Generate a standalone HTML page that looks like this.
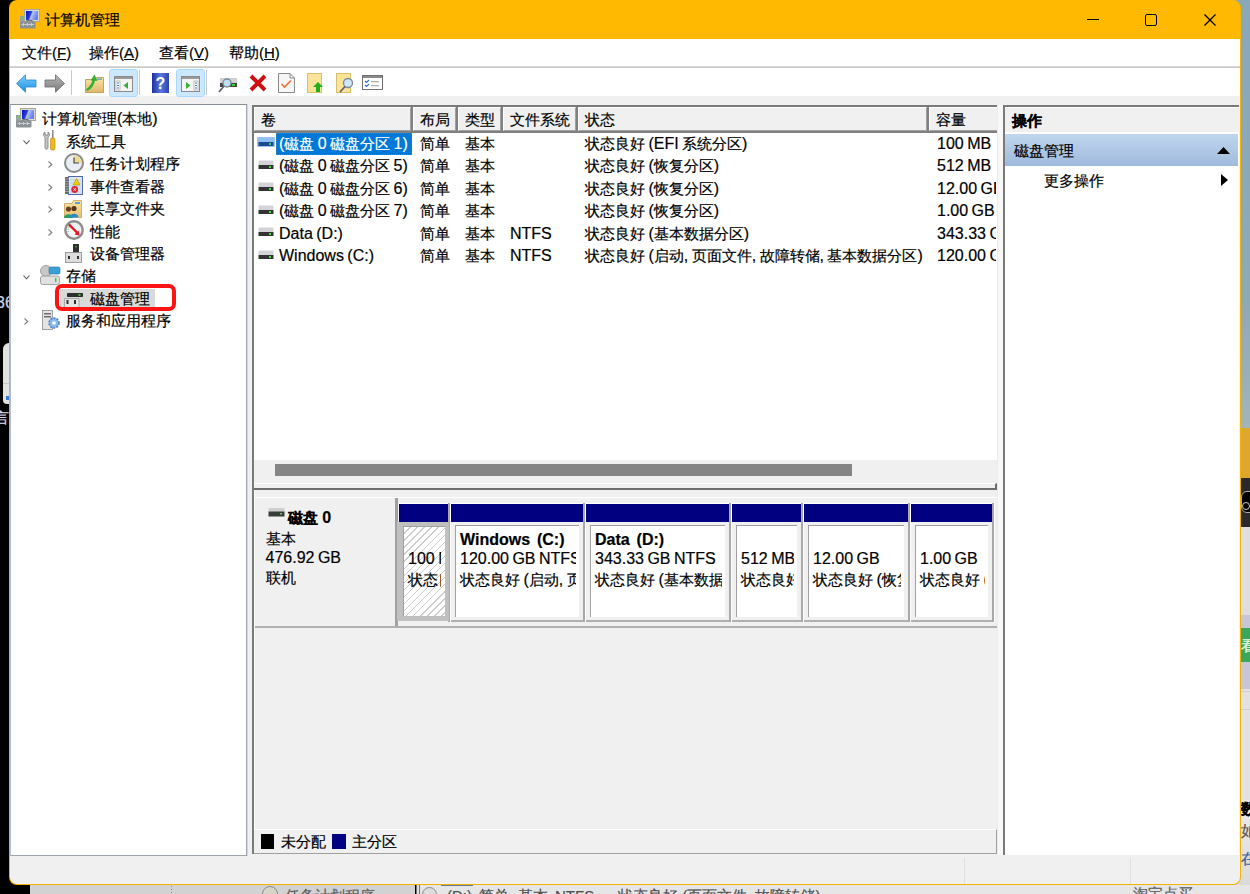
<!DOCTYPE html>
<html><head><meta charset="utf-8"><style>
*{margin:0;padding:0;box-sizing:border-box}
html,body{width:1250px;height:894px;overflow:hidden;background:#000}
body{position:relative;font-family:"Liberation Sans",sans-serif;font-size:15px;color:#000}
.t{position:absolute;white-space:nowrap;line-height:20px;font-size:15px;-webkit-text-stroke-width:0.2px}
.L{font-size:16px;word-spacing:-1px}
.b{font-weight:bold}
svg{overflow:visible}
</style></head><body>
<div style="position:absolute;left:1241px;top:0px;width:9px;height:428px;background:linear-gradient(#88a8ba,#8ea9b6 70%,#a0b4ba)"></div>
<div style="position:absolute;left:1225px;top:0px;width:25px;height:21px;background:#8aa8b8"></div>
<div style="position:absolute;left:1220px;top:870px;width:30px;height:24px;background:#d8d8d8"></div>
<div style="position:absolute;left:1241px;top:428px;width:9px;height:50px;background:#dfa72c"></div>
<div style="position:absolute;left:1241px;top:478px;width:9px;height:49px;background:#2a2a2a"></div>
<div style="position:absolute;left:1241px;top:491px;width:20px;height:22px;background:#000;border:1.2px solid #aaa;border-radius:6px"></div>
<div style="position:absolute;left:1242px;top:502px;width:8px;height:8px;border:1.3px solid #ccc;border-radius:50%"></div>
<div style="position:absolute;left:1241px;top:527px;width:9px;height:88px;background:#dedede"></div>
<div style="position:absolute;left:1241px;top:615px;width:9px;height:13px;background:#c6c6d8"></div>
<div style="position:absolute;left:1241px;top:628px;width:9px;height:34px;background:#3aa85a"></div>
<div class="t" style="left:1241px;top:636px;color:#e8f8e8">看</div>
<div style="position:absolute;left:1241px;top:662px;width:9px;height:27px;background:#c6c6d8"></div>
<div style="position:absolute;left:1241px;top:689px;width:9px;height:111px;background:#e2e2e2"></div>
<div style="position:absolute;left:1241px;top:691px;width:9px;height:1px;background:#d0d0d0"></div>
<div style="position:absolute;left:1241px;top:709px;width:9px;height:1px;background:#d0d0d0"></div>
<div style="position:absolute;left:1241px;top:800px;width:9px;height:94px;background:linear-gradient(#ececec,#d8d8d8)"></div>
<div style="position:absolute;left:1241px;top:800px;width:9px;height:90px;overflow:hidden"><div class="t" style="left:0;top:-1px;font-weight:bold">数</div><div class="t" style="left:0;top:21px;color:#555">如</div><div class="t" style="left:0;top:49px;color:#3a5a9a">在</div></div>
<div class="t" style="left:-4px;top:293px;color:#c8d8f0;font-size:16px">36</div>
<div style="position:absolute;left:3px;top:343px;width:12px;height:61px;background:#e2e2e2;border-radius:6px 0 0 4px"></div>
<div style="position:absolute;left:3px;top:383px;width:6px;height:1px;background:#c8c8c8"></div>
<div style="position:absolute;left:6px;top:396px;width:3px;height:4px;background:#3a7ad0"></div>
<div class="t" style="left:-6px;top:408px;color:#dde;font-size:15px">言</div>
<div style="position:absolute;left:30px;top:885px;width:385px;height:9px;background:#d2d2d2"></div>
<div style="position:absolute;left:420px;top:885px;width:830px;height:9px;background:#e6e6e6"></div>
<div style="position:absolute;left:416px;top:885px;width:1px;height:9px;background:#707070"></div>
<div style="position:absolute;left:419px;top:885px;width:1px;height:9px;background:#707070"></div>
<div style="position:absolute;left:417px;top:885px;width:2px;height:9px;background:#e0e0e0"></div>
<div style="position:absolute;left:171px;top:886px;width:1px;height:8px;background:repeating-linear-gradient(#888 0 1px,transparent 1px 3px)"></div>
<div style="position:absolute;left:262px;top:886px;width:16px;height:16px;border:1.5px solid #8a8a8a;border-radius:50%;background:#d8d4c8"></div>
<div class="t" style="left:285px;top:886px;color:#606060">任务计划程序</div>
<div style="position:absolute;left:422px;top:887px;width:15px;height:15px;border:1.5px solid #8a8a8a;border-radius:50%;background:#ddd"></div>
<div style="position:absolute;left:441px;top:885px;width:32px;height:1px;background:#5a7aa0"></div>
<div class="t" style="left:447px;top:886px;color:#505050">(D:)</div>
<div class="t" style="left:479px;top:886px;color:#505050">简单</div>
<div class="t" style="left:518px;top:886px;color:#505050">基本</div>
<div class="t" style="left:555px;top:886px;color:#505050">NTFS</div>
<div class="t" style="left:618px;top:886px;color:#505050">状态良好 (页面文件, 故障转储)</div>
<div class="t" style="left:1133px;top:884px;color:#606060">淘宝点买</div>
<div style="position:absolute;left:9px;top:0px;width:1232px;height:885px;border:1px solid #f6b200;border-top-color:#ffb900;border-radius:8px;background:linear-gradient(#ffb900 0 38px,#f0f0f0 38px);overflow:hidden"><div style="position:absolute;left:0;top:-1px;width:1230px;height:40px;background:#ffb900"></div><div style="position:absolute;left:0;top:38px;width:1230px;height:28px;background:#fff"></div><div style="position:absolute;left:0;top:65px;width:1230px;height:1px;background:#d8d8d8"></div><div style="position:absolute;left:0;top:66px;width:1230px;height:1px;background:#cacaca"></div><div style="position:absolute;left:0;top:67px;width:1230px;height:28px;background:#fff"></div></div>
<div class="t " style="left:45px;top:9.5px;">计算机管理</div>
<svg style="position:absolute;left:20px;top:9px" width="21" height="20" viewBox="0 0 21 20"><defs><linearGradient id="gsc" x1="0" y1="0" x2="1" y2="0.3"><stop offset="0" stop-color="#0010b8"/><stop offset="0.45" stop-color="#2a40e0"/><stop offset="0.55" stop-color="#b8c4f8"/><stop offset="1" stop-color="#6a80e8"/></linearGradient></defs><rect x="4.5" y="0.5" width="15" height="12" fill="#dcdcd0" stroke="#a8a898" stroke-width="1"/><rect x="6" y="2" width="12" height="9" fill="url(#gsc)"/><rect x="0" y="7" width="4" height="8" fill="#9aa0a4"/><rect x="1" y="8" width="2.5" height="2.5" fill="#5fd05f"/><path d="M6 12.5Q9.5 10 13 12.5" stroke="#606870" stroke-width="1.2" fill="none"/><rect x="0" y="12.5" width="15.5" height="7" rx="1" fill="#8a9298"/><rect x="1.5" y="15" width="12.5" height="1" fill="#c8ccd0"/><rect x="3" y="14" width="1" height="3" fill="#c8ccd0"/><rect x="7" y="14" width="1" height="3" fill="#c8ccd0"/><rect x="11" y="14" width="1" height="3" fill="#c8ccd0"/></svg>
<div style="position:absolute;left:1087px;top:19px;width:12px;height:1px;background:#000"></div>
<div style="position:absolute;left:1145px;top:14px;width:12px;height:12px;border:1.5px solid #000;border-radius:2px"></div>
<svg style="position:absolute;left:1204px;top:14px" width="12" height="12" viewBox="0 0 12 12"><path d="M0.5 0.5L11.5 11.5M11.5 0.5L0.5 11.5" stroke="#000" stroke-width="1.3"/></svg>
<div class="t" style="left:22px;top:43px">文件(<u>F</u>)</div>
<div class="t" style="left:89px;top:43px">操作(<u>A</u>)</div>
<div class="t" style="left:159px;top:43px">查看(<u>V</u>)</div>
<div class="t" style="left:229px;top:43px">帮助(<u>H</u>)</div>
<svg style="position:absolute;left:16px;top:74px" width="21" height="19" viewBox="0 0 21 19"><defs><linearGradient id="ga" x1="0" y1="0" x2="0" y2="1"><stop offset="0" stop-color="#7fd0ff"/><stop offset="1" stop-color="#1a8ee0"/></linearGradient></defs><path d="M0.5 9.5L9.5 0.8V6H20V13H9.5V18.2Z" fill="url(#ga)" stroke="#2a88d0" stroke-width="0.8"/></svg>
<svg style="position:absolute;left:44px;top:74px" width="21" height="19" viewBox="0 0 21 19"><defs><linearGradient id="gb" x1="0" y1="0" x2="0" y2="1"><stop offset="0" stop-color="#b8b8b8"/><stop offset="1" stop-color="#7a7a7a"/></linearGradient></defs><path d="M20.5 9.5L11.5 0.8V6H1V13H11.5V18.2Z" fill="url(#gb)" stroke="#6a6a6a" stroke-width="0.8"/></svg>
<div style="position:absolute;left:71px;top:70px;width:1px;height:25px;background:#c8c8c8"></div>
<svg style="position:absolute;left:85px;top:74px" width="19" height="19" viewBox="0 0 19 19"><defs><linearGradient id="gf1" x1="0" y1="0" x2="0" y2="1"><stop offset="0" stop-color="#fbe6a8"/><stop offset="1" stop-color="#e0b868"/></linearGradient></defs><path d="M0.5 5.5H10L11.5 3.5H18.5V18.5H0.5Z" fill="url(#gf1)" stroke="#c09a50" stroke-width="0.9"/><rect x="12" y="4.5" width="5" height="1.3" fill="#5aa0e0"/><path d="M2.5 15.5C5 14 8 12 9 5" stroke="#34b034" stroke-width="2.6" fill="none" stroke-linecap="round"/><path d="M5.5 6.5L9.5 0.5L12.5 7Z" fill="#34b034"/></svg>
<div style="position:absolute;left:109px;top:69px;width:29px;height:28px;background:#cce8ff;border:1px solid #a8d8ff;border-radius:3px"></div>
<svg style="position:absolute;left:114px;top:76px" width="19" height="16" viewBox="0 0 19 16"><rect x="0.5" y="0.5" width="18" height="15" fill="#f4f4f4" stroke="#8a8a8a"/><rect x="1" y="1" width="17" height="2" fill="#9a9a9a"/><rect x="2" y="5" width="4" height="9" fill="#fff" stroke="#9a9a9a" stroke-width="0.6"/><rect x="3" y="6.5" width="2" height="1" fill="#3a7ac8"/><rect x="3" y="9" width="2" height="1" fill="#3a7ac8"/><rect x="3" y="11.5" width="2" height="1" fill="#3a7ac8"/><path d="M14 6V13L9.5 9.5Z" fill="#38b038"/></svg>
<div style="position:absolute;left:139px;top:70px;width:1px;height:25px;background:#c8c8c8"></div>
<svg style="position:absolute;left:152px;top:73px" width="17" height="20" viewBox="0 0 17 20"><defs><linearGradient id="gh" x1="0" y1="0" x2="1" y2="0"><stop offset="0" stop-color="#1c2f9a"/><stop offset="0.5" stop-color="#5a78e0"/><stop offset="1" stop-color="#2a44b0"/></linearGradient></defs><rect x="0" y="0" width="17" height="20" fill="url(#gh)"/><text x="8.5" y="16" font-size="16" font-weight="bold" fill="#fff" text-anchor="middle" font-family="Liberation Sans">?</text></svg>
<div style="position:absolute;left:176px;top:69px;width:29px;height:28px;background:#cce8ff;border:1px solid #a8d8ff;border-radius:3px"></div>
<svg style="position:absolute;left:181px;top:76px" width="19" height="16" viewBox="0 0 19 16"><rect x="0.5" y="0.5" width="18" height="15" fill="#f4f4f4" stroke="#8a8a8a"/><rect x="1" y="1" width="17" height="2" fill="#9a9a9a"/><rect x="13" y="5" width="4" height="9" fill="#fff" stroke="#9a9a9a" stroke-width="0.6"/><rect x="14" y="6.5" width="2" height="1" fill="#3a7ac8"/><rect x="14" y="9" width="2" height="1" fill="#3a7ac8"/><rect x="14" y="11.5" width="2" height="1" fill="#3a7ac8"/><path d="M5 6V13L9.5 9.5Z" fill="#38b038"/></svg>
<div style="position:absolute;left:206px;top:70px;width:1px;height:25px;background:#c8c8c8"></div>
<svg style="position:absolute;left:218px;top:75px" width="20" height="18" viewBox="0 0 20 18"><rect x="2" y="3" width="17" height="5" fill="#d0d0d0"/><rect x="2" y="8" width="17" height="4" fill="#444"/><rect x="14" y="9" width="3" height="2" fill="#3ad03a"/><circle cx="9" cy="8" r="4" fill="#bfe0f0" stroke="#7a8a98" stroke-width="1.3"/><path d="M6 11L1 17" stroke="#5a6470" stroke-width="1.8"/></svg>
<svg style="position:absolute;left:249px;top:74px" width="18" height="18" viewBox="0 0 18 18"><path d="M2 2L16 16M16 2L2 16" stroke="#d01010" stroke-width="4"/></svg>
<svg style="position:absolute;left:278px;top:73px" width="17" height="20" viewBox="0 0 17 20"><path d="M0.5 0.5H12L16.5 5V19.5H0.5Z" fill="#f6f6f6" stroke="#8a8a8a"/><path d="M12 0.5V5H16.5" fill="none" stroke="#8a8a8a"/><path d="M3.5 11L6.5 14L13 7.5" fill="none" stroke="#f07030" stroke-width="1.6"/></svg>
<svg style="position:absolute;left:307px;top:73px" width="18" height="20" viewBox="0 0 18 20"><rect x="0.5" y="0.5" width="14" height="19" fill="#fbe49a" stroke="#d8c06a"/><path d="M11 9L16 14H13V19H9V14H6Z" fill="#20b020"/></svg>
<svg style="position:absolute;left:336px;top:73px" width="19" height="20" viewBox="0 0 19 20"><rect x="0.5" y="0.5" width="14" height="19" fill="#fbe49a" stroke="#d8c06a"/><circle cx="12" cy="10" r="4.5" fill="#cfe6f4" stroke="#7a8a98" stroke-width="1.3"/><path d="M9 13.5L4 19" stroke="#5a6470" stroke-width="1.8"/></svg>
<svg style="position:absolute;left:362px;top:75px" width="21" height="15" viewBox="0 0 21 15"><rect x="0.5" y="0.5" width="20" height="14" fill="#fff" stroke="#707070"/><rect x="1" y="1" width="19" height="2" fill="#8a8a8a"/><path d="M3 6L4.5 7.5L7 5M3 10L4.5 11.5L7 9" fill="none" stroke="#3070d0" stroke-width="1.2"/><rect x="9" y="6" width="8" height="1.3" fill="#b0b0b0"/><rect x="9" y="10" width="8" height="1.3" fill="#b0b0b0"/></svg>
<div style="position:absolute;left:10px;top:104px;width:237px;height:752px;background:#fff;border:1px solid #a0a6ae;border-top-color:#8a9098;border-left-color:#b4bccc"></div>
<div style="position:absolute;left:247px;top:104px;width:1px;height:752px;background:#d4d8dc"></div>
<svg style="position:absolute;left:16px;top:108px" width="21" height="20" viewBox="0 0 21 20"><defs><linearGradient id="gsc2" x1="0" y1="0" x2="1" y2="0.3"><stop offset="0" stop-color="#0010b8"/><stop offset="0.45" stop-color="#2a40e0"/><stop offset="0.55" stop-color="#b8c4f8"/><stop offset="1" stop-color="#6a80e8"/></linearGradient></defs><rect x="4.5" y="0.5" width="15" height="12" fill="#dcdcd0" stroke="#a8a898" stroke-width="1"/><rect x="6" y="2" width="12" height="9" fill="url(#gsc2)"/><rect x="0" y="7" width="4" height="8" fill="#9aa0a4"/><rect x="1" y="8" width="2.5" height="2.5" fill="#5fd05f"/><path d="M6 12.5Q9.5 10 13 12.5" stroke="#606870" stroke-width="1.2" fill="none"/><rect x="0" y="12.5" width="15.5" height="7" rx="1" fill="#8a9298"/><rect x="1.5" y="15" width="12.5" height="1" fill="#c8ccd0"/><rect x="3" y="14" width="1" height="3" fill="#c8ccd0"/><rect x="7" y="14" width="1" height="3" fill="#c8ccd0"/><rect x="11" y="14" width="1" height="3" fill="#c8ccd0"/></svg>
<div class="t " style="left:42px;top:109px;">计算机管理<span class="L">(</span>本地<span class="L">)</span></div>
<svg style="position:absolute;left:23px;top:139.5px" width="7" height="5" viewBox="0 0 7 5"><path d="M0.5 0.5L3.5 3.8L6.5 0.5" fill="none" stroke="#505050" stroke-width="1.1"/></svg>
<svg style="position:absolute;left:42px;top:130px" width="15" height="20" viewBox="0 0 15 20"><path d="M3 2C1 3 1 6 3 7V18C3 19.5 6 19.5 6 18V7C8 6 8 3 6 2V5H3Z" fill="#c8c8c8" stroke="#7a7a7a" stroke-width="0.8"/><rect x="10" y="0" width="1.5" height="9" fill="#8a8a8a"/><rect x="8.5" y="8" width="4.5" height="12" rx="1.5" fill="#f0b818" stroke="#b08010" stroke-width="0.6"/></svg>
<div class="t " style="left:66px;top:131.5px;">系统工具</div>
<svg style="position:absolute;left:48px;top:161px" width="5" height="7" viewBox="0 0 5 7"><path d="M0.5 0.5L3.8 3.5L0.5 6.5" fill="none" stroke="#808080" stroke-width="1.1"/></svg>
<svg style="position:absolute;left:64px;top:153px" width="20" height="20" viewBox="0 0 20 20"><circle cx="10" cy="10" r="9" fill="#e8eef4" stroke="#8a8a8a" stroke-width="2"/><path d="M10 10V2.5A7.5 7.5 0 0 1 17.5 10Z" fill="#f0d890"/><path d="M10 4.5V10H15" fill="none" stroke="#404850" stroke-width="1.2"/></svg>
<div class="t " style="left:90px;top:154px;">任务计划程序</div>
<svg style="position:absolute;left:48px;top:183.5px" width="5" height="7" viewBox="0 0 5 7"><path d="M0.5 0.5L3.8 3.5L0.5 6.5" fill="none" stroke="#808080" stroke-width="1.1"/></svg>
<svg style="position:absolute;left:65px;top:176px" width="18" height="19" viewBox="0 0 18 19"><rect x="3.5" y="0.5" width="14" height="18" fill="#dbe6f6" stroke="#5068a8" stroke-width="1"/><path d="M5 4H16M5 7H16M5 10H16M5 13H16M5 16H16" stroke="#b8c8e0" stroke-width="0.8"/><rect x="0" y="1" width="3.5" height="17" fill="#6a6a6a"/><path d="M0 3H4M0 5.5H4M0 8H4M0 10.5H4M0 13H4M0 15.5H4" stroke="#b0b0b0" stroke-width="0.8"/><path d="M11.5 2.5L15 9H8Z" fill="#f0d000" stroke="#b09000" stroke-width="0.6"/><circle cx="9.7" cy="13.5" r="3.4" fill="#d82838"/><path d="M8.5 12.3L11 14.7M11 12.3L8.5 14.7" stroke="#fff" stroke-width="0.8"/></svg>
<div class="t " style="left:90px;top:176.5px;">事件查看器</div>
<svg style="position:absolute;left:48px;top:206px" width="5" height="7" viewBox="0 0 5 7"><path d="M0.5 0.5L3.8 3.5L0.5 6.5" fill="none" stroke="#808080" stroke-width="1.1"/></svg>
<svg style="position:absolute;left:64px;top:200px" width="18" height="18" viewBox="0 0 18 18"><defs><linearGradient id="gsf" x1="0" y1="0" x2="0" y2="1"><stop offset="0" stop-color="#fbe4a0"/><stop offset="1" stop-color="#e6c070"/></linearGradient></defs><path d="M0.5 3.5H8L9.5 0.5H17.5V17.5H0.5Z" fill="url(#gsf)" stroke="#c8a058" stroke-width="0.8"/><rect x="11" y="2" width="5" height="2" fill="#58a0e0"/><circle cx="4.5" cy="9" r="2.6" fill="#6a4020"/><path d="M0 18C0 13 9 13 9 18Z" fill="#2aa060"/><circle cx="10" cy="8.5" r="2.6" fill="#5a3418"/><path d="M5.5 17.5C5.5 12.5 14.5 12.5 14.5 17.5Z" fill="#2a8ac8"/></svg>
<div class="t " style="left:90px;top:199px;">共享文件夹</div>
<svg style="position:absolute;left:48px;top:228.5px" width="5" height="7" viewBox="0 0 5 7"><path d="M0.5 0.5L3.8 3.5L0.5 6.5" fill="none" stroke="#808080" stroke-width="1.1"/></svg>
<svg style="position:absolute;left:64px;top:220px" width="20" height="20" viewBox="0 0 20 20"><defs><radialGradient id="gpf" cx="0.5" cy="0.6" r="0.6"><stop offset="0" stop-color="#ffffff"/><stop offset="1" stop-color="#e8ece8"/></radialGradient></defs><circle cx="10" cy="10" r="8.7" fill="url(#gpf)" stroke="#8c8c8c" stroke-width="2.4"/><path d="M4.5 12A6 6 0 0 1 7 5" stroke="#70a880" stroke-width="1.2" fill="none" stroke-dasharray="1 1.2"/><path d="M5 4.5L13 12.5" stroke="#e81020" stroke-width="2.4"/><path d="M10.5 14.5L15.5 15.5L14.5 10.5Z" fill="#e81020"/></svg>
<div class="t " style="left:90px;top:221.5px;">性能</div>
<svg style="position:absolute;left:65px;top:244px" width="17" height="19" viewBox="0 0 17 19"><rect x="8" y="0" width="6" height="9" fill="#303030"/><rect x="10.5" y="2" width="1" height="1.5" fill="#40e040"/><rect x="0.5" y="8.5" width="16" height="10" fill="#dcdcdc" stroke="#8a8a8a" stroke-width="0.8"/><rect x="3" y="12" width="2" height="3" fill="#303030"/><rect x="12" y="12" width="2" height="3" fill="#303030"/></svg>
<div class="t " style="left:90px;top:243.5px;">设备管理器</div>
<svg style="position:absolute;left:23px;top:274.5px" width="7" height="5" viewBox="0 0 7 5"><path d="M0.5 0.5L3.5 3.8L6.5 0.5" fill="none" stroke="#505050" stroke-width="1.1"/></svg>
<svg style="position:absolute;left:40px;top:265px" width="21" height="20" viewBox="0 0 21 20"><circle cx="6" cy="6" r="5.5" fill="#c8c8c8" stroke="#909090" stroke-width="0.8"/><rect x="9" y="2" width="11" height="7" rx="1.5" fill="#3aa0d8" stroke="#2a70a0" stroke-width="0.6"/><rect x="0.5" y="11" width="19" height="8.5" rx="2" fill="#e0e0e0" stroke="#909090" stroke-width="0.8"/><rect x="15" y="13" width="1.5" height="4" fill="#40c040"/></svg>
<div class="t " style="left:66px;top:265.5px;">存储</div>
<div style="position:absolute;left:60px;top:289px;width:95px;height:18px;background:#d9d9d9"></div>
<div style="position:absolute;left:55px;top:284px;width:121px;height:27px;border:4px solid #fc1414;border-radius:7px"></div>
<svg style="position:absolute;left:64px;top:289px" width="20" height="18" viewBox="0 0 20 18"><rect x="3" y="0" width="16" height="4" fill="#d8d8d8"/><rect x="3" y="4" width="16" height="4" rx="0.8" fill="#2e2e2e"/><rect x="14.5" y="5.2" width="2" height="1.6" fill="#40e040"/><path d="M0.5 18V9.5H15V18" fill="#e4e4e4" stroke="#9a9a9a" stroke-width="0.8"/><rect x="2.5" y="11" width="2" height="4" fill="#303030"/><rect x="10" y="11" width="2" height="4" fill="#303030"/></svg>
<div class="t " style="left:90px;top:289px;">磁盘管理</div>
<svg style="position:absolute;left:24px;top:318px" width="5" height="7" viewBox="0 0 5 7"><path d="M0.5 0.5L3.8 3.5L0.5 6.5" fill="none" stroke="#808080" stroke-width="1.1"/></svg>
<svg style="position:absolute;left:42px;top:310px" width="18" height="20" viewBox="0 0 18 20"><rect x="0.5" y="0.5" width="10" height="19" fill="#e4e4e4" stroke="#8a8a8a" stroke-width="0.8"/><rect x="2" y="3" width="7" height="1.5" fill="#707070"/><rect x="2" y="6" width="7" height="1.5" fill="#707070"/><circle cx="12" cy="13" r="5" fill="#8ab8e8" stroke="#4a80c0" stroke-width="1.5" stroke-dasharray="2 1.2"/><circle cx="12" cy="13" r="1.8" fill="#fff"/></svg>
<div class="t " style="left:66px;top:310.5px;">服务和应用程序</div>
<div style="position:absolute;left:252px;top:105px;width:745px;height:749px;background:#f0f0f0"></div>
<div style="position:absolute;left:252px;top:105px;width:2px;height:749px;background:#7a7a7a"></div>
<div style="position:absolute;left:252px;top:105px;width:745px;height:2px;background:#7a7a7a"></div>
<div style="position:absolute;left:254px;top:107px;width:743px;height:353px;background:#fff"></div>
<div style="position:absolute;left:254px;top:107px;width:159px;height:26px;background:#808080"></div>
<div style="position:absolute;left:254px;top:107px;width:157px;height:24px;background:#f0f0f0;border-top:1px solid #fff;border-left:1px solid #fff;border-right:1px solid #a0a0a0;border-bottom:1px solid #a0a0a0"></div>
<div style="position:absolute;left:413px;top:107px;width:45px;height:26px;background:#808080"></div>
<div style="position:absolute;left:413px;top:107px;width:43px;height:24px;background:#f0f0f0;border-top:1px solid #fff;border-left:1px solid #fff;border-right:1px solid #a0a0a0;border-bottom:1px solid #a0a0a0"></div>
<div style="position:absolute;left:458px;top:107px;width:45px;height:26px;background:#808080"></div>
<div style="position:absolute;left:458px;top:107px;width:43px;height:24px;background:#f0f0f0;border-top:1px solid #fff;border-left:1px solid #fff;border-right:1px solid #a0a0a0;border-bottom:1px solid #a0a0a0"></div>
<div style="position:absolute;left:503px;top:107px;width:75px;height:26px;background:#808080"></div>
<div style="position:absolute;left:503px;top:107px;width:73px;height:24px;background:#f0f0f0;border-top:1px solid #fff;border-left:1px solid #fff;border-right:1px solid #a0a0a0;border-bottom:1px solid #a0a0a0"></div>
<div style="position:absolute;left:578px;top:107px;width:351px;height:26px;background:#808080"></div>
<div style="position:absolute;left:578px;top:107px;width:349px;height:24px;background:#f0f0f0;border-top:1px solid #fff;border-left:1px solid #fff;border-right:1px solid #a0a0a0;border-bottom:1px solid #a0a0a0"></div>
<div style="position:absolute;left:929px;top:107px;width:68px;height:26px;background:#808080"></div>
<div style="position:absolute;left:929px;top:107px;width:68px;height:24px;background:#f0f0f0;border-top:1px solid #fff;border-left:1px solid #fff;border-bottom:1px solid #a0a0a0"></div>
<div class="t " style="left:261px;top:109.5px;">卷</div>
<div class="t " style="left:420px;top:109.5px;">布局</div>
<div class="t " style="left:465px;top:109.5px;">类型</div>
<div class="t " style="left:510px;top:109.5px;">文件系统</div>
<div class="t " style="left:585px;top:109.5px;">状态</div>
<div class="t " style="left:936px;top:109.5px;">容量</div>
<div style="position:absolute;left:276px;top:133px;width:136px;height:22px;background:#0078d7;border:1px dotted rgba(190,140,90,0.45)"></div>
<svg style="position:absolute;left:257px;top:137.0px" width="18" height="11" viewBox="0 0 18 11"><rect x="0" y="0" width="18" height="10" rx="1" fill="#5a9ee0" opacity="0.6"/><rect x="1.5" y="0.5" width="15" height="5" rx="1" fill="#8ec0f0"/><rect x="1.5" y="5" width="15" height="4" fill="#1a4a90"/><rect x="12" y="6" width="2" height="2" fill="#40d060"/></svg>
<div style="position:absolute;left:254px;top:133.5px;width:743px;height:22px;overflow:hidden">
</div>
<div class="t " style="left:279px;top:133.5px;color:#fff"><span class="L">(</span>磁盘<span class="L"> 0 </span>磁盘分区<span class="L"> 1)</span></div>
<div class="t " style="left:420px;top:133.5px;">简单</div>
<div class="t " style="left:465px;top:133.5px;">基本</div>
<div class="t " style="left:585px;top:133.5px;">状态良好<span class="L"> (EFI </span>系统分区<span class="L">)</span></div>
<div style="position:absolute;left:929px;top:133.5px;width:67px;height:22px;overflow:hidden">
<div class="t" style="left:8px;top:0px"><span class="L">100 MB</span></div>
</div>
<svg style="position:absolute;left:257px;top:159.5px" width="18" height="11" viewBox="0 0 18 11"><rect x="1.5" y="0.5" width="15" height="5" rx="1" fill="#d4d4d8"/><rect x="1.5" y="5" width="15" height="4" fill="#333"/><rect x="12" y="6" width="2" height="2" fill="#40e040"/></svg>
<div style="position:absolute;left:254px;top:156.0px;width:743px;height:22px;overflow:hidden">
</div>
<div class="t " style="left:279px;top:156.0px;"><span class="L">(</span>磁盘<span class="L"> 0 </span>磁盘分区<span class="L"> 5)</span></div>
<div class="t " style="left:420px;top:156.0px;">简单</div>
<div class="t " style="left:465px;top:156.0px;">基本</div>
<div class="t " style="left:585px;top:156.0px;">状态良好<span class="L"> (</span>恢复分区<span class="L">)</span></div>
<div style="position:absolute;left:929px;top:156.0px;width:67px;height:22px;overflow:hidden">
<div class="t" style="left:8px;top:0px"><span class="L">512 MB</span></div>
</div>
<svg style="position:absolute;left:257px;top:182.0px" width="18" height="11" viewBox="0 0 18 11"><rect x="1.5" y="0.5" width="15" height="5" rx="1" fill="#d4d4d8"/><rect x="1.5" y="5" width="15" height="4" fill="#333"/><rect x="12" y="6" width="2" height="2" fill="#40e040"/></svg>
<div style="position:absolute;left:254px;top:178.5px;width:743px;height:22px;overflow:hidden">
</div>
<div class="t " style="left:279px;top:178.5px;"><span class="L">(</span>磁盘<span class="L"> 0 </span>磁盘分区<span class="L"> 6)</span></div>
<div class="t " style="left:420px;top:178.5px;">简单</div>
<div class="t " style="left:465px;top:178.5px;">基本</div>
<div class="t " style="left:585px;top:178.5px;">状态良好<span class="L"> (</span>恢复分区<span class="L">)</span></div>
<div style="position:absolute;left:929px;top:178.5px;width:67px;height:22px;overflow:hidden">
<div class="t" style="left:8px;top:0px"><span class="L">12.00 GB</span></div>
</div>
<svg style="position:absolute;left:257px;top:204.5px" width="18" height="11" viewBox="0 0 18 11"><rect x="1.5" y="0.5" width="15" height="5" rx="1" fill="#d4d4d8"/><rect x="1.5" y="5" width="15" height="4" fill="#333"/><rect x="12" y="6" width="2" height="2" fill="#40e040"/></svg>
<div style="position:absolute;left:254px;top:201.0px;width:743px;height:22px;overflow:hidden">
</div>
<div class="t " style="left:279px;top:201.0px;"><span class="L">(</span>磁盘<span class="L"> 0 </span>磁盘分区<span class="L"> 7)</span></div>
<div class="t " style="left:420px;top:201.0px;">简单</div>
<div class="t " style="left:465px;top:201.0px;">基本</div>
<div class="t " style="left:585px;top:201.0px;">状态良好<span class="L"> (</span>恢复分区<span class="L">)</span></div>
<div style="position:absolute;left:929px;top:201.0px;width:67px;height:22px;overflow:hidden">
<div class="t" style="left:8px;top:0px"><span class="L">1.00 GB</span></div>
</div>
<svg style="position:absolute;left:257px;top:227.0px" width="18" height="11" viewBox="0 0 18 11"><rect x="1.5" y="0.5" width="15" height="5" rx="1" fill="#d4d4d8"/><rect x="1.5" y="5" width="15" height="4" fill="#333"/><rect x="12" y="6" width="2" height="2" fill="#40e040"/></svg>
<div style="position:absolute;left:254px;top:223.5px;width:743px;height:22px;overflow:hidden">
</div>
<div class="t " style="left:279px;top:223.5px;"><span class="L">Data (D:)</span></div>
<div class="t " style="left:420px;top:223.5px;">简单</div>
<div class="t " style="left:465px;top:223.5px;">基本</div>
<div class="t " style="left:510px;top:223.5px;"><span class="L">NTFS</span></div>
<div class="t " style="left:585px;top:223.5px;">状态良好<span class="L"> (</span>基本数据分区<span class="L">)</span></div>
<div style="position:absolute;left:929px;top:223.5px;width:67px;height:22px;overflow:hidden">
<div class="t" style="left:8px;top:0px"><span class="L">343.33 GB</span></div>
</div>
<svg style="position:absolute;left:257px;top:249.5px" width="18" height="11" viewBox="0 0 18 11"><rect x="1.5" y="0.5" width="15" height="5" rx="1" fill="#d4d4d8"/><rect x="1.5" y="5" width="15" height="4" fill="#333"/><rect x="12" y="6" width="2" height="2" fill="#40e040"/></svg>
<div style="position:absolute;left:254px;top:246.0px;width:743px;height:22px;overflow:hidden">
</div>
<div class="t " style="left:279px;top:246.0px;"><span class="L">Windows (C:)</span></div>
<div class="t " style="left:420px;top:246.0px;">简单</div>
<div class="t " style="left:465px;top:246.0px;">基本</div>
<div class="t " style="left:510px;top:246.0px;"><span class="L">NTFS</span></div>
<div class="t " style="left:585px;top:246.0px;">状态良好<span class="L"> (</span>启动<span class="L">, </span>页面文件<span class="L">, </span>故障转储<span class="L">, </span>基本数据分区<span class="L">)</span></div>
<div style="position:absolute;left:929px;top:246.0px;width:67px;height:22px;overflow:hidden">
<div class="t" style="left:8px;top:0px"><span class="L">120.00 GB</span></div>
</div>
<div style="position:absolute;left:254px;top:460px;width:743px;height:24px;background:#f0f0f0"></div>
<div style="position:absolute;left:275px;top:464px;width:577px;height:12px;background:#858585"></div>
<div style="position:absolute;left:254px;top:483px;width:743px;height:7px;background:#f0f0f0;border-top:1px solid #fff;border-bottom:2px solid #6e6e6e;border-right:2px solid #6e6e6e"></div>
<div style="position:absolute;left:254px;top:497px;width:743px;height:1px;background:#fff"></div>
<div style="position:absolute;left:254px;top:498px;width:142px;height:130px;background:#f0f0f0;border-right:1px solid #a0a0a0;border-bottom:1px solid #a0a0a0"></div>
<div style="position:absolute;left:396px;top:498px;width:2px;height:130px;background:#a0a0a0"></div>
<div style="position:absolute;left:254px;top:626px;width:743px;height:2px;background:#b0b0b0"></div>
<div style="position:absolute;left:254px;top:490px;width:1px;height:363px;background:#fff"></div>
<svg style="position:absolute;left:268px;top:508px" width="17" height="10" viewBox="0 0 17 10"><rect x="0.5" y="0" width="16" height="4" rx="1" fill="#cfcfcf"/><rect x="0.5" y="3.5" width="16" height="5" fill="#3a3a3a"/><rect x="12" y="5" width="2" height="1.5" fill="#40e040"/></svg>
<div class="t " style="left:288px;top:508px;"><b>磁盘 <span class="L">0</span></b></div>
<div class="t " style="left:265.5px;top:528.5px;">基本</div>
<div class="t " style="left:265.5px;top:548px;"><span class="L">476.92 GB</span></div>
<div class="t " style="left:265.5px;top:568px;">联机</div>
<div style="position:absolute;left:448px;top:503px;width:2px;height:119px;background:#a8a8a8"></div>
<div style="position:absolute;left:450px;top:503px;width:1px;height:119px;background:#fff"></div>
<div style="position:absolute;left:399px;top:503px;width:49px;height:1px;background:#fff"></div>
<div style="position:absolute;left:399px;top:504px;width:49px;height:18px;background:#000080"></div>
<div style="position:absolute;left:397px;top:522px;width:52px;height:99px;background:#c0c0c0"></div>
<div style="position:absolute;left:403px;top:526px;width:42px;height:90px;border-top:1px solid #a0a0a0;border-left:1px solid #a0a0a0;background:#fff repeating-linear-gradient(135deg,#fff 0px,#fff 4px,#cccccc 4px,#cccccc 5px)"></div>
<div style="position:absolute;left:407px;top:527px;width:34px;height:70px;overflow:hidden">
<div class="t" style="left:1px;top:22px"><span class="L">100 MB</span></div>
<div class="t" style="left:1px;top:42.5px">状态良好<span class="L"> (EFI </span>系统分区<span class="L">)</span></div>
</div>
<div style="position:absolute;left:583px;top:503px;width:2px;height:119px;background:#a8a8a8"></div>
<div style="position:absolute;left:585px;top:503px;width:1px;height:119px;background:#fff"></div>
<div style="position:absolute;left:451px;top:503px;width:132px;height:1px;background:#fff"></div>
<div style="position:absolute;left:451px;top:504px;width:132px;height:18px;background:#000080"></div>
<div style="position:absolute;left:455px;top:525px;width:124px;height:92px;background:#fff;border-top:1px solid #a0a0a0;border-left:1px solid #a0a0a0"></div>
<div style="position:absolute;left:451px;top:620px;width:132px;height:2px;background:#b0b0b0"></div>
<div style="position:absolute;left:459px;top:527px;width:117px;height:70px;overflow:hidden">
<div class="t b" style="left:1px;top:3px"><span class="L">Windows &nbsp;(C:)</span></div>
<div class="t" style="left:1px;top:22px"><span class="L">120.00 GB NTFS</span></div>
<div class="t" style="left:1px;top:42.5px">状态良好<span class="L"> (</span>启动<span class="L">, </span>页面文件<span class="L">, </span>故障转储<span class="L">, </span>基本数据分区<span class="L">)</span></div>
</div>
<div style="position:absolute;left:729px;top:503px;width:2px;height:119px;background:#a8a8a8"></div>
<div style="position:absolute;left:731px;top:503px;width:1px;height:119px;background:#fff"></div>
<div style="position:absolute;left:586px;top:503px;width:143px;height:1px;background:#fff"></div>
<div style="position:absolute;left:586px;top:504px;width:143px;height:18px;background:#000080"></div>
<div style="position:absolute;left:590px;top:525px;width:135px;height:92px;background:#fff;border-top:1px solid #a0a0a0;border-left:1px solid #a0a0a0"></div>
<div style="position:absolute;left:586px;top:620px;width:143px;height:2px;background:#b0b0b0"></div>
<div style="position:absolute;left:594px;top:527px;width:128px;height:70px;overflow:hidden">
<div class="t b" style="left:1px;top:3px"><span class="L">Data &nbsp;(D:)</span></div>
<div class="t" style="left:1px;top:22px"><span class="L">343.33 GB NTFS</span></div>
<div class="t" style="left:1px;top:42.5px">状态良好<span class="L"> (</span>基本数据分区<span class="L">)</span></div>
</div>
<div style="position:absolute;left:801px;top:503px;width:2px;height:119px;background:#a8a8a8"></div>
<div style="position:absolute;left:803px;top:503px;width:1px;height:119px;background:#fff"></div>
<div style="position:absolute;left:732px;top:503px;width:69px;height:1px;background:#fff"></div>
<div style="position:absolute;left:732px;top:504px;width:69px;height:18px;background:#000080"></div>
<div style="position:absolute;left:736px;top:525px;width:61px;height:92px;background:#fff;border-top:1px solid #a0a0a0;border-left:1px solid #a0a0a0"></div>
<div style="position:absolute;left:732px;top:620px;width:69px;height:2px;background:#b0b0b0"></div>
<div style="position:absolute;left:740px;top:527px;width:54px;height:70px;overflow:hidden">
<div class="t" style="left:1px;top:22px"><span class="L">512 MB</span></div>
<div class="t" style="left:1px;top:42.5px">状态良好<span class="L"> (</span>恢复分区<span class="L">)</span></div>
</div>
<div style="position:absolute;left:908px;top:503px;width:2px;height:119px;background:#a8a8a8"></div>
<div style="position:absolute;left:910px;top:503px;width:1px;height:119px;background:#fff"></div>
<div style="position:absolute;left:804px;top:503px;width:104px;height:1px;background:#fff"></div>
<div style="position:absolute;left:804px;top:504px;width:104px;height:18px;background:#000080"></div>
<div style="position:absolute;left:808px;top:525px;width:96px;height:92px;background:#fff;border-top:1px solid #a0a0a0;border-left:1px solid #a0a0a0"></div>
<div style="position:absolute;left:804px;top:620px;width:104px;height:2px;background:#b0b0b0"></div>
<div style="position:absolute;left:812px;top:527px;width:89px;height:70px;overflow:hidden">
<div class="t" style="left:1px;top:22px"><span class="L">12.00 GB</span></div>
<div class="t" style="left:1px;top:42.5px">状态良好<span class="L"> (</span>恢复分区<span class="L">)</span></div>
</div>
<div style="position:absolute;left:992px;top:503px;width:2px;height:119px;background:#a8a8a8"></div>
<div style="position:absolute;left:994px;top:503px;width:1px;height:119px;background:#fff"></div>
<div style="position:absolute;left:911px;top:503px;width:81px;height:1px;background:#fff"></div>
<div style="position:absolute;left:911px;top:504px;width:81px;height:18px;background:#000080"></div>
<div style="position:absolute;left:915px;top:525px;width:73px;height:92px;background:#fff;border-top:1px solid #a0a0a0;border-left:1px solid #a0a0a0"></div>
<div style="position:absolute;left:911px;top:620px;width:81px;height:2px;background:#b0b0b0"></div>
<div style="position:absolute;left:919px;top:527px;width:66px;height:70px;overflow:hidden">
<div class="t" style="left:1px;top:22px"><span class="L">1.00 GB</span></div>
<div class="t" style="left:1px;top:42.5px">状态良好<span class="L"> (</span>恢复分区<span class="L">)</span></div>
</div>
<div style="position:absolute;left:254px;top:829px;width:743px;height:25px;background:#f0f0f0;border-top:1px solid #fff;border-bottom:1px solid #a0a0a0;border-right:1px solid #a0a0a0"></div>
<div style="position:absolute;left:261px;top:834px;width:13px;height:15px;background:#000"></div>
<div class="t " style="left:281px;top:832px;">未分配</div>
<div style="position:absolute;left:332px;top:834px;width:14px;height:15px;background:#000080"></div>
<div class="t " style="left:352px;top:832px;">主分区</div>
<div style="position:absolute;left:997px;top:105px;width:6px;height:750px;background:#f8f8f8;border-left:1px solid #ececec"></div>
<div style="position:absolute;left:1003px;top:105px;width:236px;height:750px;background:#fff"></div>
<div style="position:absolute;left:1003px;top:105px;width:2px;height:750px;background:#7a7a7a"></div>
<div style="position:absolute;left:1003px;top:105px;width:236px;height:2px;background:#7a7a7a"></div>
<div style="position:absolute;left:1005px;top:107px;width:234px;height:25px;background:#f0f0f0;border-top:1px solid #fff"></div>
<div class="t " style="left:1012px;top:110.5px;"><b>操作</b></div>
<div style="position:absolute;left:1005px;top:134px;width:233px;height:32px;background:linear-gradient(#bfd6ee,#a0badc)"></div>
<div class="t " style="left:1014px;top:141.3px;">磁盘管理</div>
<svg style="position:absolute;left:1217px;top:147px" width="13" height="7" viewBox="0 0 13 7"><path d="M0 7L6.5 0L13 7Z" fill="#000"/></svg>
<div class="t " style="left:1044px;top:170.8px;">更多操作</div>
<svg style="position:absolute;left:1221px;top:174px" width="7" height="12" viewBox="0 0 7 12"><path d="M0 0L7 6L0 12Z" fill="#000"/></svg>
<div style="position:absolute;left:964px;top:858px;width:1px;height:26px;background:#e0e0e0"></div>
<div style="position:absolute;left:1130px;top:858px;width:1px;height:26px;background:#e0e0e0"></div>
</body></html>
